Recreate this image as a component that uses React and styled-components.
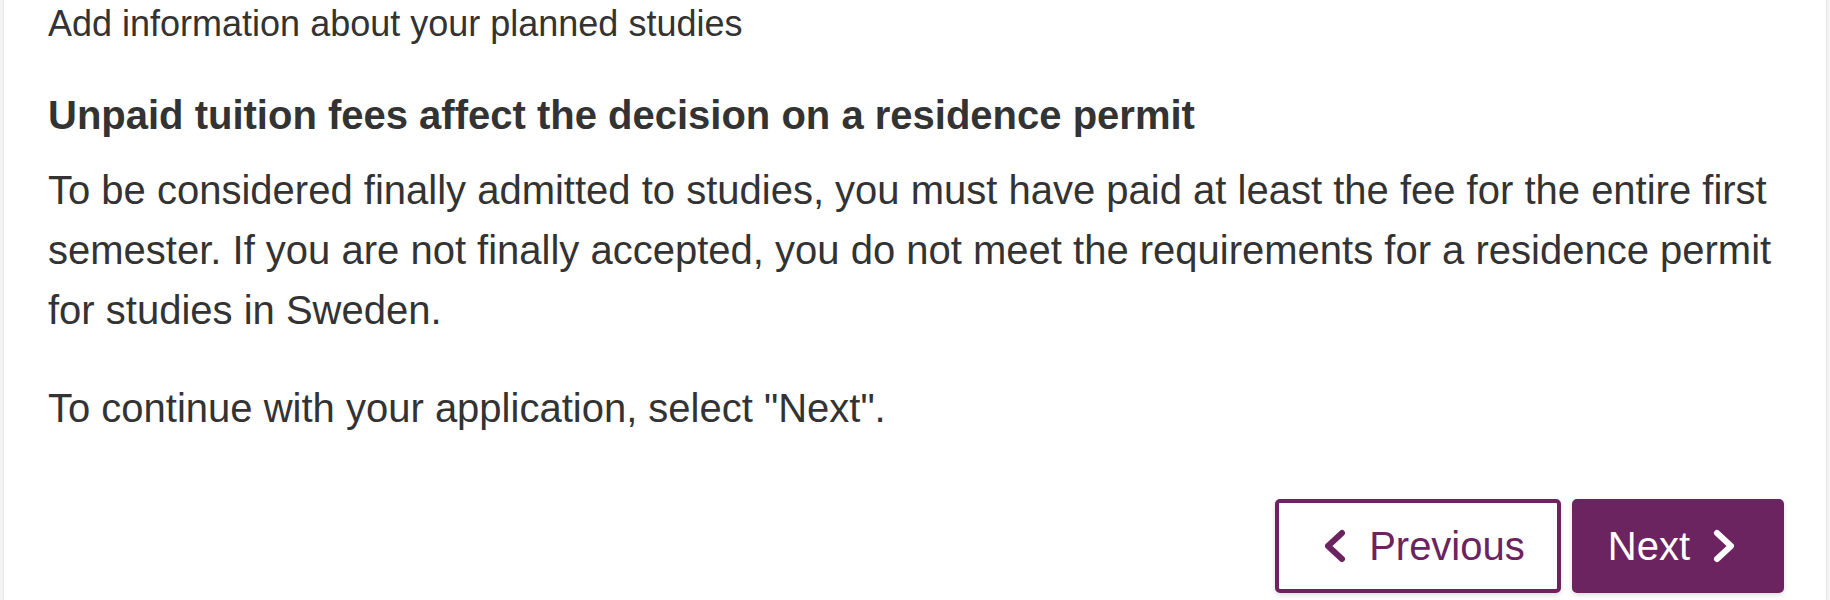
import React from 'react';
import styled, { createGlobalStyle } from 'styled-components';

const purple = '#6b2460';
const ink = '#333333';

const GlobalStyle = createGlobalStyle`
  html, body {
    margin: 0;
    padding: 0;
    background: #f3f3f3;
    font-family: "Liberation Sans", Arial, sans-serif;
    color: ${ink};
  }
`;

/* white panel that holds the step */
const PageBlock = styled.main`
  box-sizing: border-box;
  min-height: 100vh;
  margin: 0 3px;
  padding: 4px 42px 0 44px;
  background: #ffffff;
  border-left: 1px solid #e6e6e6;
  border-right: 1px solid #e6e6e6;
`;

const Lead = styled.p`
  margin: 0;
  font-size: 36px;
  line-height: 40px;
`;

const Heading = styled.h2`
  margin: 47px 0 21px;
  font-size: 40px;
  line-height: 48px;
  font-weight: 700;
`;

const Paragraph = styled.p`
  margin: 0 0 38px;
  font-size: 40px;
  line-height: 60px;
  &:last-of-type {
    margin-bottom: 0;
  }
`;

const Actions = styled.div`
  display: flex;
  justify-content: flex-end;
  gap: 11px;
  margin-top: 61px;
`;

/* primary = filled, otherwise outlined */
const NavButton = styled.button`
  display: inline-flex;
  align-items: center;
  gap: 23px;
  box-sizing: border-box;
  height: 94px;
  padding: ${(p) => (p.$iconFirst ? '0 32px 0 45px' : '0 45px 0 32px')};
  border: 4px solid ${purple};
  border-radius: 5px;
  background: ${(p) => (p.$primary ? purple : '#ffffff')};
  color: ${(p) => (p.$primary ? '#ffffff' : purple)};
  font-family: "Liberation Sans", Arial, sans-serif;
  font-size: 40px;
  line-height: 60px;
  box-shadow: 0 2px 5px rgba(0, 0, 0, 0.14);
  cursor: pointer;
`;

const Chevron = ({ dir }) => (
  <svg width="22" height="34" viewBox="0 0 22 34" aria-hidden="true">
    <polyline
      points={dir === 'left' ? '18,4 4,17 18,30' : '4,4 18,17 4,30'}
      fill="none"
      stroke="currentColor"
      strokeWidth="6"
      strokeLinecap="round"
      strokeLinejoin="round"
    />
  </svg>
);

const App = () => {
  return (
    <>
      <GlobalStyle />
      <PageBlock>
        <Lead>Add information about your planned studies</Lead>
        <Heading>Unpaid tuition fees affect the decision on a residence permit</Heading>
        <Paragraph>
          To be considered finally admitted to studies, you must have paid at least the fee for the
          entire first semester. If you are not finally accepted, you do not meet the requirements
          for a residence permit for studies in Sweden.
        </Paragraph>
        <Paragraph>To continue with your application, select "Next".</Paragraph>
        <Actions>
          <NavButton type="button" $iconFirst>
            <Chevron dir="left" />
            Previous
          </NavButton>
          <NavButton type="button" $primary>
            Next
            <Chevron dir="right" />
          </NavButton>
        </Actions>
      </PageBlock>
    </>
  );
};

export default App;
